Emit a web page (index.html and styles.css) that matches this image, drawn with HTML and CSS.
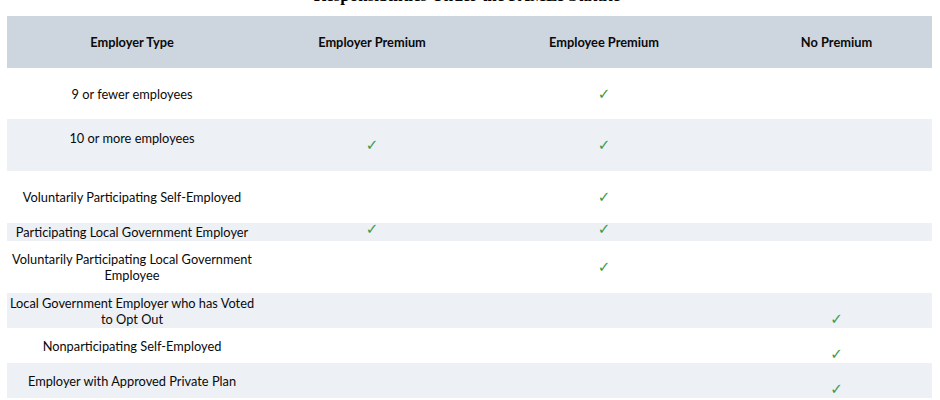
FILE: index.html
```html
<!DOCTYPE html>
<html>
<head>
<meta charset="utf-8">
<link rel="stylesheet" href="styles.css">
</head>
<body>
<div class="page">
  <h1 class="title">Responsibilities Under the FAMLI Statute</h1>
  <table class="grid">
    <colgroup>
      <col class="c1"><col class="c2"><col class="c3"><col class="c4">
    </colgroup>
    <thead>
      <tr class="head">
        <th>Employer Type</th>
        <th>Employer Premium</th>
        <th>Employee Premium</th>
        <th class="last">No Premium</th>
      </tr>
    </thead>
    <tbody>
      <tr class="r-51">
        <td>9 or fewer employees</td>
        <td></td>
        <td><span class="chk">✓</span></td>
        <td class="last"></td>
      </tr>
      <tr class="alt r-52">
        <td class="up">10 or more employees</td>
        <td><span class="chk">✓</span></td>
        <td><span class="chk">✓</span></td>
        <td class="last"></td>
      </tr>
      <tr class="r-52">
        <td>Voluntarily Participating Self-Employed</td>
        <td></td>
        <td><span class="chk">✓</span></td>
        <td class="last"></td>
      </tr>
      <tr class="alt r-18">
        <td>Participating Local Government Employer</td>
        <td><span class="chk nudge">✓</span></td>
        <td><span class="chk nudge">✓</span></td>
        <td class="last"></td>
      </tr>
      <tr class="r-52">
        <td>Voluntarily Participating Local Government Employee</td>
        <td></td>
        <td><span class="chk">✓</span></td>
        <td class="last"></td>
      </tr>
      <tr class="alt r-35">
        <td>Local Government Employer who has Voted to Opt Out</td>
        <td></td>
        <td></td>
        <td class="last low"><span class="chk">✓</span></td>
      </tr>
      <tr class="r-35">
        <td>Nonparticipating Self-Employed</td>
        <td></td>
        <td></td>
        <td class="last low"><span class="chk">✓</span></td>
      </tr>
      <tr class="alt r-35">
        <td>Employer with Approved Private Plan</td>
        <td></td>
        <td></td>
        <td class="last low"><span class="chk">✓</span></td>
      </tr>
    </tbody>
  </table>
</div>
</body>
</html>
```
FILE: styles.css
```css
html, body {
  margin: 0;
  padding: 0;
  background: #ffffff;
  overflow: hidden;
}

.page {
  width: 940px;
  height: 400px;
  overflow: hidden;
}

.title {
  margin: -13px 0 12px 0;
  font-family: "Liberation Serif", "Times New Roman", serif;
  font-weight: bold;
  font-size: 17px;
  line-height: 17px;
  text-align: center;
  color: #000;
  padding-right: 6px;
}

.grid {
  margin-left: 7px;
  width: 925px;
  table-layout: fixed;
  border-collapse: collapse;
  border-spacing: 0;
  font-family: "Lato", "Open Sans", sans-serif;
  font-size: 12.8px;
  color: #0a0a0a;
}

.c1 { width: 250px; }
.c2 { width: 230px; }
.c3 { width: 234px; }
.c4 { width: 211px; }

.grid th,
.grid td {
  padding: 0 2px;
  text-align: center;
  vertical-align: middle;
  line-height: 16px;
}

.grid .last {
  padding-left: 22px;
}

.head {
  height: 52px;
  background: #cdd5df;
}

.head th {
  font-weight: bold;
  font-size: 12.8px;
  color: #0a0a0a;
}

.alt { background: #edf0f5; }

.r-51 { height: 51px; }
.r-52 { height: 52px; }
.r-18 { height: 18px; }
.r-35 { height: 35px; }

.up { padding-bottom: 14px !important; }

.low { padding-top: 16px !important; }

.chk {
  display: inline-block;
  font-family: "DejaVu Sans", sans-serif;
  font-size: 15px;
  line-height: 12px;
  color: #3f9a48;
}

.nudge {
  position: relative;
  top: -3px;
}
```
